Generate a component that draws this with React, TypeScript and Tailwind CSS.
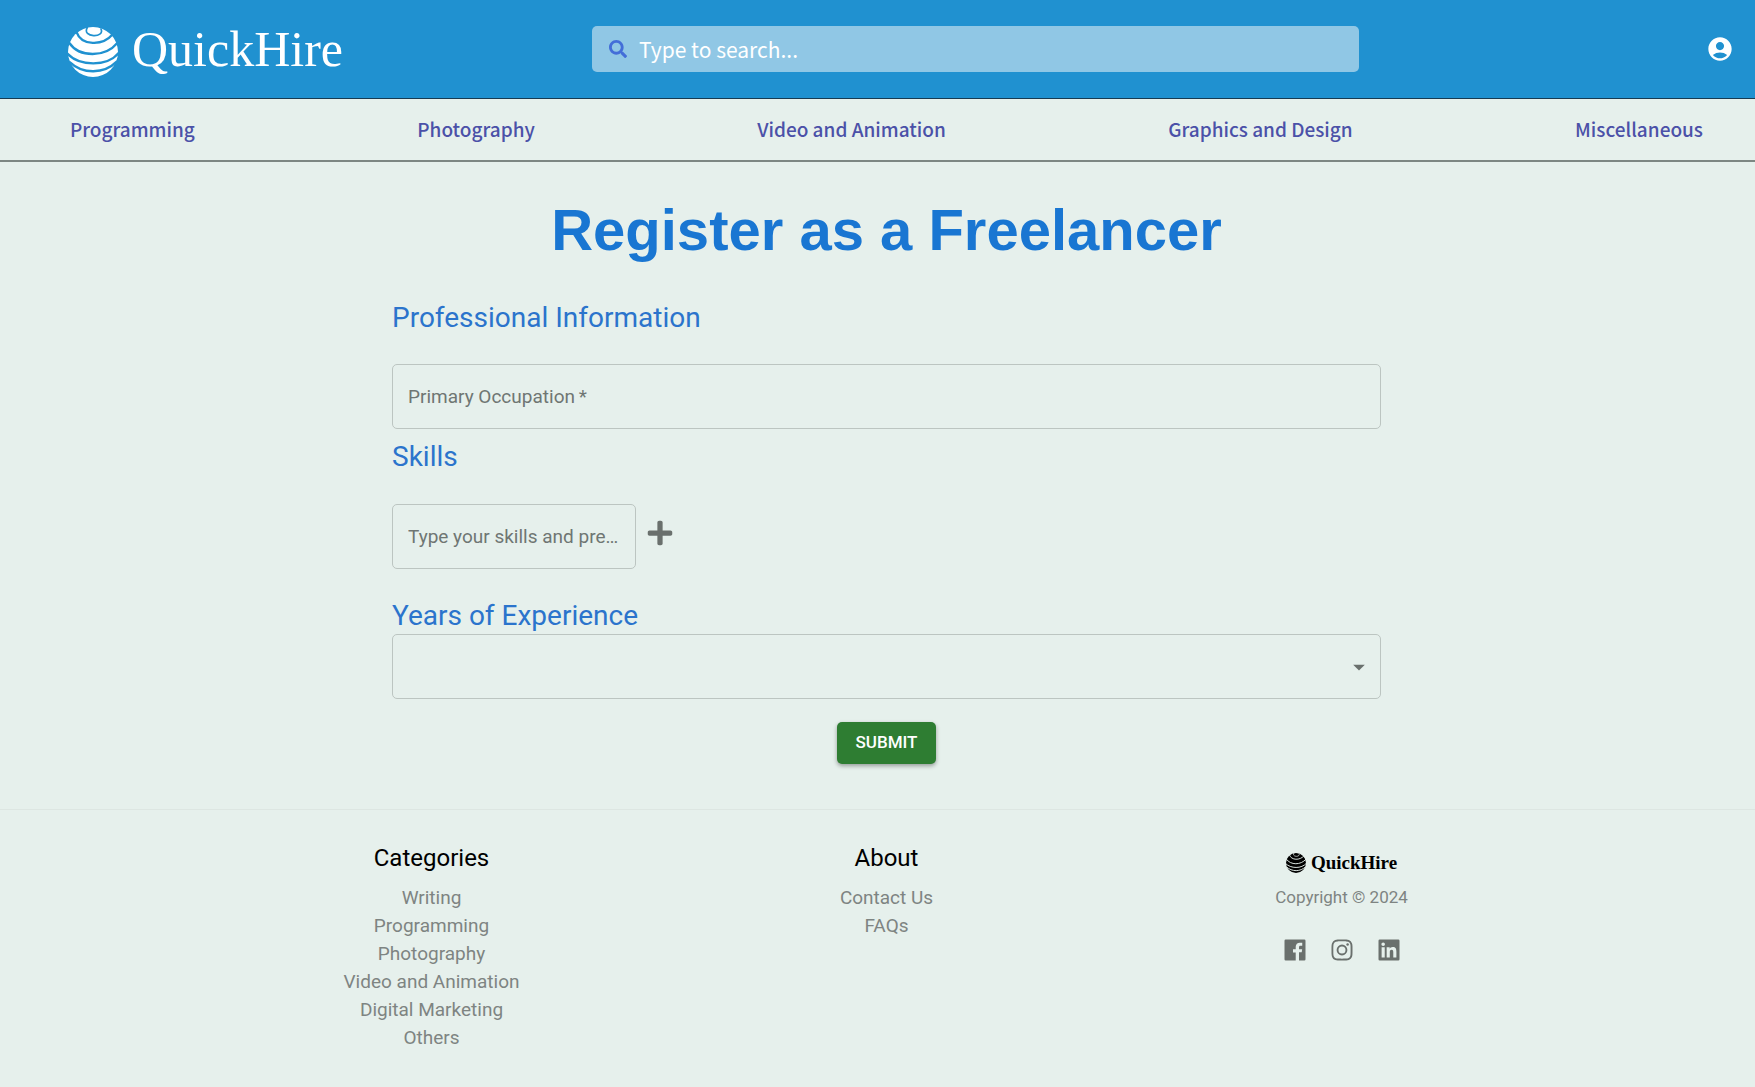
import { useState } from "react";
import { BiLogoFacebookSquare, BiLogoInstagram, BiLogoLinkedinSquare } from "react-icons/bi";
import { FaPlus, FaSearch } from "react-icons/fa";
import { MdAccountCircle, MdArrowDropDown } from "react-icons/md";

const navItems = ["Programming", "Photography", "Video and Animation", "Graphics and Design", "Miscellaneous"];
const categories = ["Writing", "Programming", "Photography", "Video and Animation", "Digital Marketing", "Others"];
const about = ["Contact Us", "FAQs"];

function Globe({ className, id }: { className: string; id: string }) {
  return (
    <svg viewBox="0 0 150 150" className={className} aria-hidden="true">
      <mask id={id}>
        <circle cx="75" cy="75" r="75" fill="#fff" />
        <g fill="none" stroke="#000" strokeLinecap="round">
          <path d="M58 2C40 32 112 34 99 6" strokeWidth="5" />
          <path d="M26 16C40 56 104 58 134 22" strokeWidth="7" />
          <path d="M4 48C34 92 112 92 148 48" strokeWidth="7" />
          <path d="M-2 80C34 118 118 120 152 78" strokeWidth="7" />
          <path d="M6 106C44 142 108 142 146 104" strokeWidth="7" />
        </g>
      </mask>
      <rect width="150" height="150" fill="currentColor" mask={`url(#${id})`} />
    </svg>
  );
}

function FooterList({ title, items }: { title: string; items: string[] }) {
  return (
    <section className="text-center">
      <h2 className="text-[24px] leading-8 text-black">{title}</h2>
      <ul className="mt-[10px] text-[19px] leading-7 text-[#7e8482]">
        {items.map((item) => (
          <li key={item}>
            <a href="#">{item}</a>
          </li>
        ))}
      </ul>
    </section>
  );
}

export default function App() {
  const [years, setYears] = useState("");
  const heading = "block text-[28px] leading-9 text-[#2b74cc]";
  const field =
    "h-[65px] w-full rounded-[5px] border border-[#bcc5c1] bg-transparent pl-[15px] pr-2 text-[19px] text-[#333] outline-none placeholder:text-[#6f7673] placeholder:opacity-100 text-ellipsis";

  return (
    <div className="min-h-screen bg-[#e6f0ec] font-[Roboto,sans-serif]">
      <header className="grid h-[99px] grid-cols-[592fr_767fr_396fr] items-center border-b border-[#173b52] bg-[#2091d0] font-['Noto_Sans_CJK_SC',sans-serif]">
        <a href="#" className="flex items-center gap-[14px] pl-[68px] text-white">
          <Globe id="globe-header" className="mt-[6px] size-[50px]" />
          <span className="font-['Liberation_Serif',serif] text-[50px] leading-[60px]">QuickHire</span>
        </a>
        <form role="search" className="flex h-[46px] items-center rounded-[5px] bg-[#90c7e5] pl-[17px]">
          <FaSearch className="size-[18px] text-[#436ed8]" />
          <input
            type="text"
            aria-label="Search"
            placeholder="Type to search..."
            className="ml-3 h-full flex-1 bg-transparent text-[21px] text-white outline-none placeholder:text-white"
          />
        </form>
        <button type="button" aria-label="Account" className="mr-[21px] justify-self-end text-white">
          <MdAccountCircle className="size-7" />
        </button>
      </header>
      <nav className="flex h-[63px] items-center justify-between border-b-2 border-[#7d8783] pr-[52px] pl-[70px] font-['Noto_Sans_CJK_SC',sans-serif] text-[19px] font-medium text-[#4b51a8]">
        {navItems.map((item) => (
          <a key={item} href="#">{item}</a>
        ))}
      </nav>

      <main className="pl-[18px]">
        <form className="mx-auto flex max-w-[989px] flex-col" onSubmit={(e) => e.preventDefault()}>
          <h1 className="mt-9 text-center font-['Liberation_Sans',sans-serif] text-[58px] leading-[64px] font-bold whitespace-nowrap text-[#1976d2]">
            Register as a Freelancer
          </h1>
          <h2 className={`mt-[38px] ${heading}`}>Professional Information</h2>
          <input
            required
            type="text"
            aria-label="Primary Occupation"
            placeholder={"Primary Occupation\u2009*"}
            className={`mt-7 ${field}`}
          />
          <label htmlFor="skills" className={`mt-[10px] ${heading}`}>Skills</label>
          <div className="mt-[29px] flex items-center gap-[10px]">
            <div className="w-[244px]">
              <input id="skills" type="text" placeholder="Type your skills and press enter" className={field} />
            </div>
            <button type="button" aria-label="Add skill" className="mb-2 text-[#6a706d]">
              <FaPlus className="size-7" />
            </button>
          </div>
          <label htmlFor="years" className={`mt-[29px] ${heading}`}>Years of Experience</label>
          <div className="relative">
            <select
              id="years"
              value={years}
              onChange={(e) => setYears(e.target.value)}
              className={`block appearance-none ${field}`}
            >
              <option value=""></option>
              <option value="1">0-1</option>
              <option value="3">1-3</option>
              <option value="5">3+</option>
            </select>
            <MdArrowDropDown className="pointer-events-none absolute top-[19px] right-2 size-7 text-[#6a706d]" />
          </div>
          <button
            type="submit"
            className="mt-[23px] h-[42px] self-center rounded-[5px] bg-[#2e7d32] px-[19px] text-[17px] font-medium text-white shadow-[0_2px_4px_rgba(0,0,0,0.35)]"
          >
            SUBMIT
          </button>
        </form>
      </main>

      <footer className="mt-[45px] border-t border-[#dde6e2] pt-8 pb-9 pl-[18px]">
        <div className="mx-auto grid max-w-[1365px] grid-cols-3">
          <FooterList title="Categories" items={categories} />
          <FooterList title="About" items={about} />
          <section className="flex flex-col items-center">
            <a href="#" className="mt-[9px] flex items-center gap-[5px] text-black">
              <Globe id="globe-footer" className="size-5" />
              <span className="font-['Liberation_Serif',serif] text-[19px] leading-6 font-bold">QuickHire</span>
            </a>
            <p className="mt-2 text-[17px] leading-7 text-[#7e8482]">Copyright © 2024</p>
            <div className="mt-[25px] flex gap-[19px] text-[#6a706d]">
              <a href="#" aria-label="Facebook"><BiLogoFacebookSquare className="size-7" /></a>
              <a href="#" aria-label="Instagram"><BiLogoInstagram className="size-7" /></a>
              <a href="#" aria-label="LinkedIn"><BiLogoLinkedinSquare className="size-7" /></a>
            </div>
          </section>
        </div>
      </footer>
    </div>
  );
}
